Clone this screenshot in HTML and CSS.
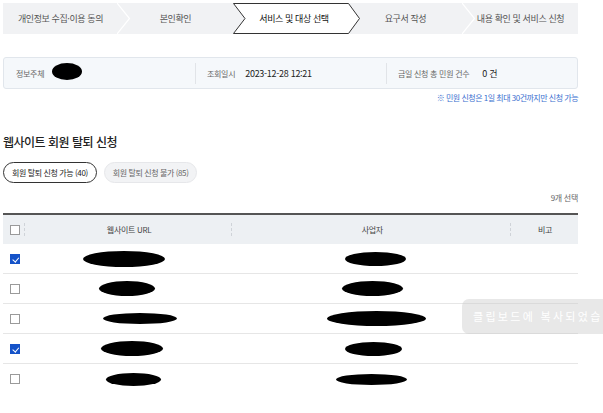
FILE: index.html
```html
<!DOCTYPE html>
<html lang="ko">
<head>
<meta charset="utf-8">
<title>웹사이트 회원 탈퇴 신청</title>
<link rel="stylesheet" href="styles.css">
</head>
<body>
<div class="page">
  <ol class="stepper">
    <li class="step">
      <span class="step-label">개인정보 수집·이용 동의</span>
      <svg class="sep" width="14" height="31" viewBox="0 0 14 31"><polyline points="0,0 12.5,15.5 0,31" fill="none" stroke="#fff" stroke-width="1.2"/></svg>
    </li>
    <li class="step">
      <span class="step-label">본인확인</span>
    </li>
    <li class="step step-active">
      <svg class="active-shape" width="128" height="31" viewBox="0 0 128 31"><polygon points="0.5,0.5 115.5,0.5 126.5,15.5 115.5,30.5 0.5,30.5 12,15.5" fill="#fff" stroke="#333" stroke-width="1"/></svg>
      <span class="step-label">서비스 및 대상 선택</span>
    </li>
    <li class="step">
      <span class="step-label">요구서 작성</span>
      <svg class="sep" width="14" height="31" viewBox="0 0 14 31"><polyline points="0,0 12.5,15.5 0,31" fill="none" stroke="#fff" stroke-width="1.2"/></svg>
    </li>
    <li class="step">
      <span class="step-label">내용 확인 및 서비스 신청</span>
    </li>
  </ol>

  <div class="info">
    <div class="info-col info-first">
      <span class="info-label">정보주체</span>
      <span class="redact redact-name"></span>
    </div>
    <div class="info-col">
      <span class="info-label">조회일시</span>
      <span class="info-value">2023-12-28 12:21</span>
    </div>
    <div class="info-col">
      <span class="info-label">금일 신청 총 민원 건수</span>
      <span class="info-value info-count">0 건</span>
    </div>
  </div>
  <p class="notice">※ 민원 신청은 1일 최대 30건까지만 신청 가능</p>

  <h2 class="title">웹사이트 회원 탈퇴 신청</h2>
  <div class="tabs">
    <button class="tab tab-on">회원 탈퇴 신청 가능 (40)</button>
    <button class="tab">회원 탈퇴 신청 불가 (85)</button>
  </div>
  <p class="selected">9개 선택</p>

  <div class="table">
    <div class="row head">
      <div class="cell c-check"><span class="cb"></span></div>
      <div class="cell c-url">웹사이트 URL</div>
      <div class="cell c-biz">사업자</div>
      <div class="cell c-note">비고</div>
    </div>
    <div class="row">
      <div class="cell c-check"><span class="cb cb-on"></span></div>
      <div class="cell c-url"><span class="redact" style="width:82px;height:16px;margin-left:-12px"></span></div>
      <div class="cell c-biz"><span class="redact" style="width:61px;height:14px;margin-left:6px"></span></div>
      <div class="cell c-note"></div>
    </div>
    <div class="row">
      <div class="cell c-check"><span class="cb"></span></div>
      <div class="cell c-url"><span class="redact" style="width:56px;height:15px;margin-left:-5px"></span></div>
      <div class="cell c-biz"><span class="redact" style="width:61px;height:15px"></span></div>
      <div class="cell c-note"></div>
    </div>
    <div class="row">
      <div class="cell c-check"><span class="cb"></span></div>
      <div class="cell c-url"><span class="redact" style="width:74px;height:11px;margin-left:21px"></span></div>
      <div class="cell c-biz"><span class="redact" style="width:99px;height:15px;margin-left:8px"></span></div>
      <div class="cell c-note"></div>
    </div>
    <div class="row">
      <div class="cell c-check"><span class="cb cb-on"></span></div>
      <div class="cell c-url"><span class="redact" style="width:62px;height:15px;margin-left:5px"></span></div>
      <div class="cell c-biz"><span class="redact" style="width:57px;height:14px;margin-left:2px"></span></div>
      <div class="cell c-note"></div>
    </div>
    <div class="row row-last">
      <div class="cell c-check"><span class="cb"></span></div>
      <div class="cell c-url"><span class="redact" style="width:55px;height:13px;margin-left:8px"></span></div>
      <div class="cell c-biz"><span class="redact" style="width:71px;height:11px;margin-left:-2px"></span></div>
      <div class="cell c-note"></div>
    </div>
  </div>
</div>
<div class="toast">클립보드에 복사되었습니다.</div>
</body>
</html>
```

FILE: styles.css
```css
html, body {
  margin: 0;
  padding: 0;
  overflow: hidden;
  background: #fff;
}
body {
  font-family: "Noto Sans CJK KR", "Noto Sans", sans-serif;
  color: #222;
  width: 603px;
  height: 413px;
  position: relative;
}
.page {
  width: 575px;
  padding: 3px 0 0 3px;
}

/* stepper */
.stepper {
  list-style: none;
  margin: 0;
  padding: 0;
  display: flex;
  height: 31px;
  background: #f1f2f4;
}
.step {
  position: relative;
  width: 115px;
  flex: 0 0 115px;
  display: flex;
  align-items: center;
  justify-content: center;
  font-size: 9px;
  letter-spacing: -0.4px;
  color: #555;
}
.step-label {
  position: relative;
  z-index: 2;
}
.sep {
  position: absolute;
  right: -13px;
  top: 0;
  z-index: 1;
}
.active-shape {
  position: absolute;
  left: 0;
  top: 0;
  z-index: 1;
}
.step-active {
  color: #111;
  padding-left: 5px;
  box-sizing: border-box;
}
.step-active .step-label {
  left: 1px;
}

/* info */
.info {
  margin-top: 23px;
  height: 30px;
  border: 1px solid #e1e6ec;
  border-radius: 3px;
  background: #f5f8fb;
  display: flex;
  align-items: center;
}
.info-col {
  flex: 1 1 0;
  display: flex;
  align-items: center;
  gap: 10px;
  padding: 0 11px;
  height: 21px;
  border-left: 1px solid #e1e4e8;
}
.info-first {
  border-left: 0;
  padding-left: 12px;
  gap: 8px;
}
.info-label {
  font-size: 8px;
  letter-spacing: -0.3px;
  color: #666;
}
.info-value {
  font-size: 9px;
  letter-spacing: -0.3px;
  color: #222;
}
.info-count {
  margin-left: 3px;
}
.redact {
  display: inline-block;
  background: #000;
  border-radius: 50%;
}
.redact-name {
  width: 30px;
  height: 17px;
  margin-top: -3px;
}
.notice {
  margin: 3px 0 0;
  text-align: right;
  font-size: 8px;
  letter-spacing: -0.5px;
  color: #3b6fcf;
  line-height: 12px;
}

/* title & tabs */
.title {
  margin: 30px 0 0;
  font-size: 12px;
  font-weight: 500;
  letter-spacing: -0.5px;
  line-height: 16px;
  color: #222;
}
.tabs {
  display: flex;
  gap: 7px;
  margin-top: 12px;
}
.tab {
  height: 21px;
  padding: 0 8px;
  border-radius: 11px;
  font-family: inherit;
  font-size: 8px;
  letter-spacing: -0.4px;
  line-height: 19px;
  background: #f2f3f5;
  border: 1px solid #e6e7ea;
  color: #666;
}
.tab-on {
  background: #fff;
  border-color: #333;
  color: #222;
}
.selected {
  margin: 9px 0 0;
  text-align: right;
  font-size: 8px;
  letter-spacing: -0.3px;
  color: #666;
  line-height: 12px;
}

/* table */
.table {
  margin-top: 9px;
  border-top: 2px solid #555;
}
.row {
  display: flex;
  height: 30px;
  box-sizing: border-box;
  border-bottom: 1px solid #e6e6e6;
}
.row-last {
  border-bottom: 0;
}
.head {
  height: 29px;
  background: #edf0f3;
  border-bottom: 0;
  font-size: 8px;
  letter-spacing: -0.3px;
  color: #444;
}
.cell {
  display: flex;
  align-items: center;
  justify-content: center;
  position: relative;
}
.c-check {
  width: 23px;
  justify-content: flex-start;
  padding-left: 7px;
  box-sizing: border-box;
}
.c-url { width: 207px; }
.c-biz { width: 279px; }
.c-note { width: 66px; }
.head .c-check,
.head .c-url,
.head .c-biz {
  border-right: 1px dashed transparent;
}
.head .c-check::after,
.head .c-url::after,
.head .c-biz::after {
  content: "";
  position: absolute;
  right: 0;
  top: 8px;
  height: 13px;
  border-right: 1px dashed #cfd3d8;
}
.cb {
  display: inline-block;
  width: 10px;
  height: 10px;
  box-sizing: border-box;
  border: 1px solid #9a9a9a;
  background: #fff;
  position: relative;
}
.cb-on {
  background: #1452c8;
  border-color: #1452c8;
}
.cb-on::after {
  content: "";
  position: absolute;
  left: 2.5px;
  top: 1.2px;
  width: 2.5px;
  height: 4.5px;
  border-right: 1px solid #fff;
  border-bottom: 1px solid #fff;
  transform: rotate(40deg);
}

/* toast */
.toast {
  position: absolute;
  left: 462px;
  top: 299px;
  width: 170px;
  height: 35px;
  box-sizing: border-box;
  padding-left: 11px;
  border-radius: 7px;
  background: rgba(205, 205, 205, 0.45);
  color: #fff;
  font-size: 11px;
  letter-spacing: 2.3px;
  line-height: 35px;
  white-space: nowrap;
}
```
